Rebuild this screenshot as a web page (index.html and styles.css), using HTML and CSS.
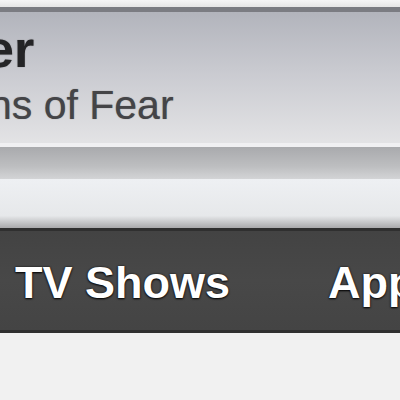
FILE: index.html
```html
<!DOCTYPE html>
<html lang="en">

<head>
    <meta charset="UTF-8">
    <meta name="viewport" content="width=device-width, initial-scale=1.0">
    <title>Store</title>
    <link rel="stylesheet" href="styles.css">
</head>

<body>
    <div class="top-strip"></div>

    <div class="now-playing">
        <p class="title">er</p>
        <p class="subtitle">ns of Fear</p>
    </div>

    <div class="shelf"></div>
    <div class="gap"></div>

    <nav class="tab-bar">
        <span class="tab">TV Shows</span>
        <span class="tab">Apps</span>
    </nav>

    <div class="page"></div>
</body>

</html>
```
FILE: styles.css
```css
body {
    font-family: "Liberation Sans", Arial, sans-serif;
    margin: 0;
    padding: 0;
    overflow: hidden;
    width: 400px;
    height: 400px;
    background: #f1f1f1;
}

.top-strip {
    height: 7px;
    background: linear-gradient(#f6f6f6, #e6e6e6);
}

.now-playing {
    border-top: 5px solid #7b7c82;
    background: linear-gradient(#b2b4bc, #c9cad0 45%, #e3e3e5);
    padding-top: 11px;
    box-sizing: border-box;
    height: 136px;
    overflow: hidden;
    white-space: nowrap;
}

.now-playing p {
    margin: 0;
}

.title {
    font-size: 52px;
    line-height: 52px;
    font-weight: bold;
    color: #242426;
    margin-left: -15px !important;
    text-shadow: 0 0 1px rgba(36, 36, 38, 0.5);
}

.subtitle {
    font-size: 41px;
    line-height: 40px;
    color: #444447;
    margin-top: 10px !important;
    margin-left: -11px !important;
    text-shadow: 0 0 1px rgba(60, 60, 64, 0.6);
}

.shelf {
    height: 32px;
    border-top: 4px solid #f0f0f2;
    background: linear-gradient(#a9aaad, #bdbec0 60%, #d3d4d6);
}

.gap {
    height: 49px;
    background: linear-gradient(#eef0f3, #e6e8ea 75%, #a9a9ab);
}

.tab-bar {
    display: flex;
    gap: 98px;
    height: 105px;
    box-sizing: border-box;
    padding: 29px 0 0 15px;
    border-top: 3px solid #2f2f2f;
    border-bottom: 3px solid #303030;
    background: linear-gradient(#434343, #484848 50%, #444444);
    white-space: nowrap;
    overflow: hidden;
}

.tab {
    font-size: 45px;
    line-height: 46px;
    font-weight: bold;
    color: #ffffff;
    text-shadow: 0 0 2px #111, 0 1px 2px #000;
}

.page {
    height: 60px;
    background: #f1f1f1;
}
```
